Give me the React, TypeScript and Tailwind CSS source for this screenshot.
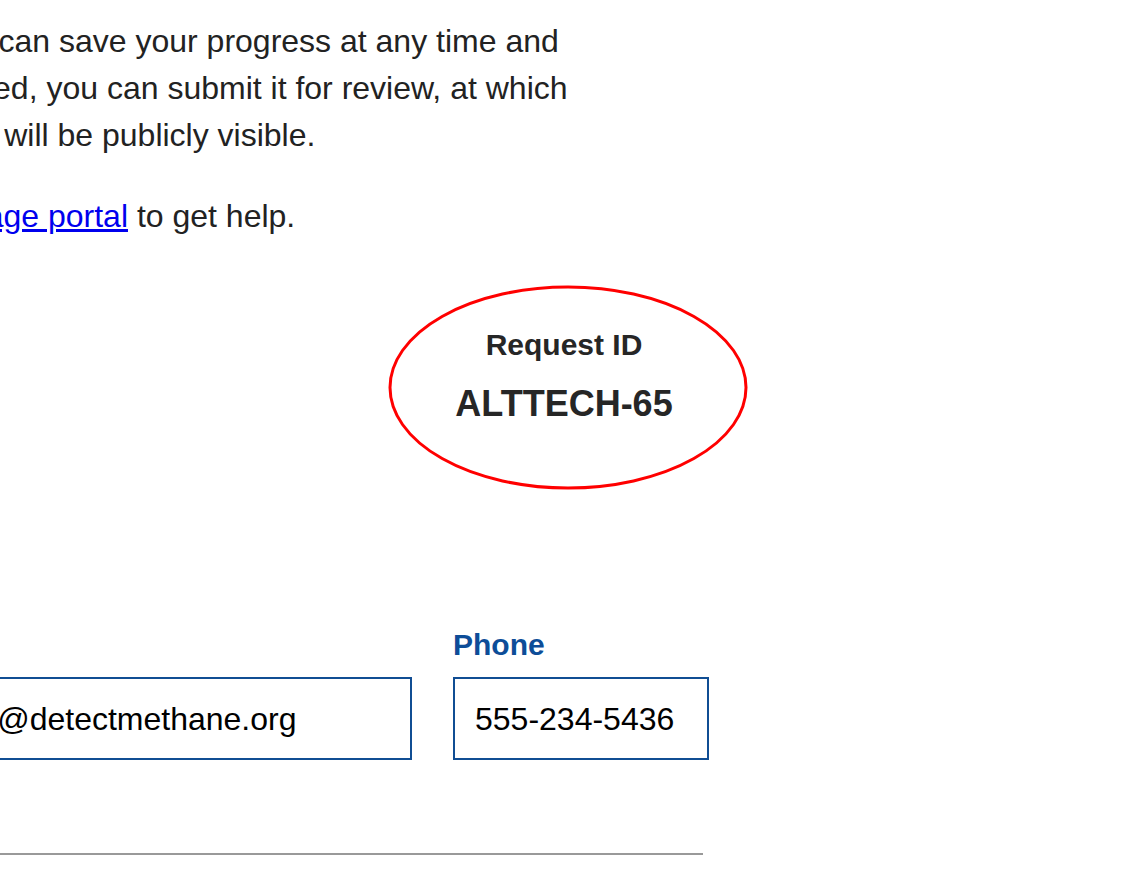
const lines = [
  { text: "you can save your progress at any time and", offset: "-ml-[62px]" },
  { text: "completed, you can submit it for review, at which", offset: "-ml-[119px]" },
  { text: "point it will be publicly visible.", offset: "-ml-[99px]" },
];

export default function App() {
  return (
    <div className="w-[1148px] h-[892px] overflow-hidden bg-white font-['Liberation_Sans',Arial,sans-serif]">
      <div className="pt-[18px] text-[32px] leading-[47px] text-[#222]">
        {lines.map((line, i) => (
          <div key={i} className={`whitespace-nowrap ${line.offset}`}>
            {line.text}
          </div>
        ))}
        <div className="mt-[34px] whitespace-nowrap -ml-[41px]">
          <a href="#" className="text-[#0000ee] underline">
            triage portal
          </a>{" "}
          to get help.
        </div>
      </div>

      {/* request id, with the red ellipse annotation over it */}
      <div className="relative mt-[87px] ml-[434px] w-[260px] text-center text-[#262626] font-bold">
        <div className="text-[30px] leading-[36px]">Request ID</div>
        <div className="mt-[19px] text-[36px] leading-[44px]">ALTTECH-65</div>
        <svg
          className="absolute left-[-46px] top-[-42px]"
          width="360"
          height="205"
          viewBox="0 0 360 205"
          fill="none"
        >
          <ellipse cx="180" cy="102.5" rx="178" ry="100.5" stroke="#ff0000" strokeWidth="3" />
        </svg>
      </div>

      <div className="mt-[201px] -ml-[128px] w-[837px]">
        <div className="grid grid-cols-[540px_256px] gap-x-[41px]">
          <div className="flex flex-col justify-end">
            <div className="h-[83px] border-2 border-[#104d93] pl-[20px] flex items-center text-[32px] text-black whitespace-nowrap">
              contact@detectmethane.org
            </div>
          </div>
          <div className="flex flex-col">
            <label className="text-[30px] leading-[36px] font-bold text-[#0d4d98] mb-[14px]">Phone</label>
            <div className="h-[83px] border-2 border-[#104d93] pl-[20px] flex items-center text-[32px] text-black whitespace-nowrap">
              555-234-5436
            </div>
          </div>
        </div>
        <div className="mt-[93px] w-[831px] h-[2px] bg-[#999]" />
      </div>
    </div>
  );
}
